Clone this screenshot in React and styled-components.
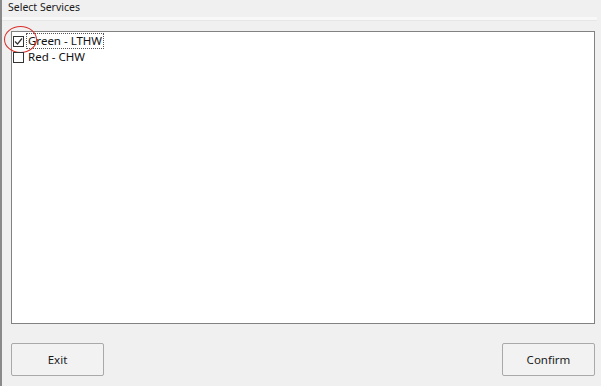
import React from 'react';
import styled, { createGlobalStyle } from 'styled-components';

const Global = createGlobalStyle`
  html, body {
    margin: 0;
    padding: 0;
    background: #f0f0f0;
  }
  body {
    font-family: "Noto Sans", "Open Sans", Arial, sans-serif;
    color: #000;
  }
`;

const services = [
  { id: 'lthw', label: 'Green - LTHW', checked: true, focused: true },
  { id: 'chw', label: 'Red - CHW', checked: false, focused: false },
];

function CheckIcon() {
  return (
    <svg width="9" height="9" viewBox="0 0 9 9">
      <path d="M1 4.5 L3.5 7 L8 1.5" fill="none" stroke="#333" strokeWidth="1.2" />
    </svg>
  );
}

function App() {
  const [items, setItems] = React.useState(services);

  const toggle = (id) =>
    setItems(items.map((it) => (it.id === id ? { ...it, checked: !it.checked } : it)));

  return (
    <>
      <Global />
      <Window>
        <Title>Select Services</Title>
        <Divider />
        <Body>
          <ListBox>
            {items.map((it) => (
              <Row key={it.id} onClick={() => toggle(it.id)}>
                <Box>{it.checked && <CheckIcon />}</Box>
                <Label $focused={it.focused}>{it.label}</Label>
                {it.focused && <Marker />}
              </Row>
            ))}
          </ListBox>
          <Actions>
            <Button>Exit</Button>
            <Button>Confirm</Button>
          </Actions>
        </Body>
      </Window>
    </>
  );
}

const Window = styled.div`
  width: 601px;
  height: 386px;
  box-sizing: border-box;
  border-left: 2px solid #8a8a8a;
  display: flex;
  flex-direction: column;
`;

const Title = styled.div`
  height: 17px;
  padding: 0 0 0 6px;
  font-size: 10.5px;
  line-height: 14px;
  color: #1a1a1a;
`;

const Divider = styled.div`
  height: 3px;
  margin-right: 4px;
  background: #f8f8f8;
  border-bottom: 1px solid #e6e6e6;
`;

const Body = styled.div`
  flex: 1;
  display: flex;
  flex-direction: column;
  padding: 10px 4px 0 9px;
`;

const ListBox = styled.div`
  height: 293px;
  margin-right: 2px;
  background: #fff;
  border: 1px solid #828282;
  box-sizing: border-box;
  padding: 1px 0 0 1px;
  display: flex;
  flex-direction: column;
`;

const Row = styled.div`
  position: relative;
  display: flex;
  align-items: center;
  height: 16px;
  cursor: default;
`;

const Box = styled.div`
  width: 11px;
  height: 11px;
  box-sizing: border-box;
  border: 1px solid #333;
  background: #fff;
  display: flex;
  align-items: center;
  justify-content: center;
`;

const Label = styled.span`
  display: inline-block;
  height: 14px;
  margin-left: 3px;
  padding: 0 1px;
  font-size: 11.5px;
  line-height: 14px;
  color: #111;
  outline: ${(p) => (p.$focused ? '1px dotted #555' : 'none')};
`;

const Marker = styled.div`
  position: absolute;
  left: -9px;
  top: -7px;
  width: 31px;
  height: 25px;
  border: 1px solid #d9302c;
  border-radius: 50%;
  pointer-events: none;
`;

const Actions = styled.div`
  display: flex;
  justify-content: space-between;
  margin-top: 19px;
  margin-right: 2px;
`;

const Button = styled.button`
  width: 93px;
  height: 33px;
  background: #f2f2f2;
  border: 1px solid #a9a9a9;
  border-radius: 2px;
  font-family: "Noto Sans", "Open Sans", Arial, sans-serif;
  font-size: 11.5px;
  color: #1a1a1a;
  padding: 0;
`;

export default App;
